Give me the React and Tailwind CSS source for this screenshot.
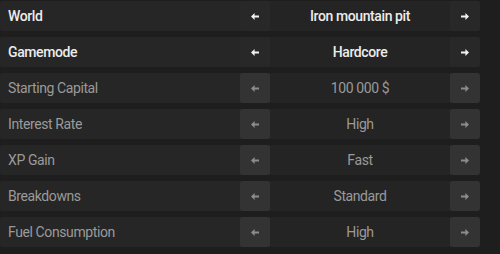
import React from "react";

const rows = [
  { label: "World", value: "Iron mountain pit", active: true },
  { label: "Gamemode", value: "Hardcore", active: true },
  { label: "Starting Capital", value: "100 000 $", active: false },
  { label: "Interest Rate", value: "High", active: false },
  { label: "XP Gain", value: "Fast", active: false },
  { label: "Breakdowns", value: "Standard", active: false },
  { label: "Fuel Consumption", value: "High", active: false },
];

function Arrow({ dir }) {
  return (
    <svg width="8" height="7" viewBox="0 0 8 7">
      {dir === "left" ? (
        <path d="M0 3.5 L3.6 0 L3.6 2.4 L8 2.4 L8 4.6 L3.6 4.6 L3.6 7 Z" fill="currentColor" />
      ) : (
        <path d="M8 3.5 L4.4 0 L4.4 2.4 L0 2.4 L0 4.6 L4.4 4.6 L4.4 7 Z" fill="currentColor" />
      )}
    </svg>
  );
}

export default function App() {
  return (
    <div
      className="w-[500px] h-[254px] bg-[#1e1e1e] pt-px flex flex-col gap-[6px]"
      style={{ fontFamily: '"Roboto", sans-serif' }}
    >
      {rows.map((r) => (
        <div key={r.label} className="w-[480px] h-[30px] flex bg-[#262626] rounded-[2px]">
          <div
            className={`w-[240px] flex items-center pl-[8px] text-[14px] tracking-[-0.4px] ${
              r.active ? "text-[#ececec] font-medium" : "text-[#9a9a9a]"
            }`}
          >
            {r.label}
          </div>
          <div
            className={`w-[30px] flex items-center justify-center rounded-[3px] ${
              r.active ? "bg-[#282828] text-[#f2f2f2]" : "bg-[#333333] text-[#8c8c8c]"
            }`}
          >
            <Arrow dir="left" />
          </div>
          <div
            className={`flex-1 flex items-center justify-center text-[14px] tracking-[-0.4px] bg-[#242424] ${
              r.active ? "text-[#ececec] font-medium" : "text-[#9a9a9a]"
            }`}
          >
            {r.value}
          </div>
          <div
            className={`w-[30px] flex items-center justify-center rounded-[3px] ${
              r.active ? "bg-[#282828] text-[#f2f2f2]" : "bg-[#333333] text-[#8c8c8c]"
            }`}
          >
            <Arrow dir="right" />
          </div>
        </div>
      ))}
    </div>
  );
}
